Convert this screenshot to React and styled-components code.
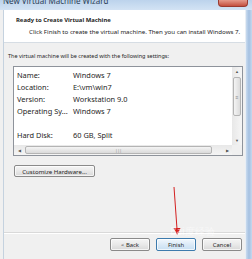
import React from "react";
import styled, { createGlobalStyle } from "styled-components";

const GlobalStyle = createGlobalStyle`
  html, body { margin: 0; padding: 0; background: #f0f0f0; }
  body { font-family: "Noto Sans", "Liberation Sans", sans-serif; color: #1e1e1e; }
`;

const Frame = styled.div`
  position: relative;
  width: 252px;
  height: 259px;
  overflow: hidden;
  display: flex;
  flex-direction: column;
  background: #f0f0f0;
`;

const TitleBar = styled.div`
  height: 10px;
  flex: none;
  display: flex;
  align-items: flex-start;
  justify-content: space-between;
  background: linear-gradient(#bcd3ec, #d3e3f4);
  overflow: hidden;
`;

const TitleText = styled.span`
  font-size: 8px;
  line-height: 8px;
  color: #2b3f57;
  margin: -3px 0 0 3px;
  white-space: nowrap;
`;

const CloseBtn = styled.div`
  width: 28px;
  height: 6px;
  margin-right: 4px;
  border-radius: 0 0 4px 4px;
  background: linear-gradient(#e59a8c, #c4503f);
  border: 1px solid #9a3a30;
  border-top: none;
`;

const Row = styled.div`
  flex: 1;
  display: flex;
  min-height: 0;
`;

const Dialog = styled.div`
  flex: 1;
  display: flex;
  flex-direction: column;
  margin-left: 3px;
  border-left: 1px solid #c5d2df;
  border-right: 1px solid #e8eef5;
`;

const RightEdge = styled.div`
  width: 6px;
  flex: none;
  background: linear-gradient(90deg, #c9dbef, #a4c0e1 50%, #c6d8ee);
`;

const Header = styled.div`
  height: 33px;
  flex: none;
  background: #fff;
  border-bottom: 1px solid #d6dde4;
  padding: 4px 0 0 12px;
  box-sizing: border-box;
`;

const HeadTitle = styled.div`
  font-size: 5.9px;
  font-weight: bold;
  line-height: 12px;
  white-space: nowrap;
`;

const HeadSub = styled.div`
  font-size: 6.15px;
  line-height: 12px;
  padding-left: 13px;
  white-space: nowrap;
`;

const Body = styled.div`
  flex: 1;
  display: flex;
  flex-direction: column;
  padding: 8px 0 0 4px;
`;

const Intro = styled.div`
  font-size: 5.5px;
  line-height: 10px;
  white-space: nowrap;
`;

const ListBox = styled.div`
  margin: 5px 0 0 5px;
  width: 230px;
  height: 90px;
  box-sizing: border-box;
  border: 1px solid #8e939b;
  background: #fff;
  display: grid;
  grid-template-columns: 1fr 10px;
  grid-template-rows: 1fr 10px;
`;

const List = styled.div`
  overflow: hidden;
  padding: 2px 0 0 3px;
`;

const Item = styled.div`
  display: flex;
  height: 12px;
  line-height: 12px;
  font-size: 7.4px;
  white-space: nowrap;
`;

const Label = styled.span`
  width: 56px;
  flex: none;
`;

const VScroll = styled.div`
  display: flex;
  flex-direction: column;
  align-items: center;
  background: linear-gradient(90deg, #e8e8e8, #f5f5f5);
`;

const ArrowBox = styled.div`
  width: ${p => p.w || 10}px;
  height: ${p => p.h || 9}px;
  display: flex;
  align-items: center;
  justify-content: center;
  font-size: 4px;
  color: #555;
  flex: none;
`;

const VThumb = styled.div`
  width: 8px;
  height: 39px;
  margin-top: 1px;
  box-sizing: border-box;
  border: 1px solid #b4b4b4;
  border-radius: 2px;
  background: linear-gradient(90deg, #f4f4f4, #dcdcdc);
  display: flex;
  align-items: center;
  justify-content: center;
  font-size: 5px;
  color: #888;
`;

const Spacer = styled.div`
  flex: 1;
`;

const HScroll = styled.div`
  display: flex;
  align-items: center;
  background: linear-gradient(#e8e8e8, #f5f5f5);
`;

const HThumb = styled.div`
  width: 187px;
  height: 8px;
  margin-left: 1px;
  box-sizing: border-box;
  border: 1px solid #b4b4b4;
  border-radius: 2px;
  background: linear-gradient(#f4f4f4, #dadada);
  display: flex;
  align-items: center;
  justify-content: center;
  font-size: 4px;
  color: #888;
`;

const Corner = styled.div`
  background: #f0f0f0;
`;

const Button = styled.button`
  font-family: inherit;
  font-size: 5.9px;
  color: #1e1e1e;
  height: 13px;
  width: ${p => p.w || 40}px;
  padding: 0;
  box-sizing: border-box;
  border: 1px solid ${p => (p.primary ? "#3d7bad" : "#8a8a8a")};
  border-radius: 2px;
  background: ${p =>
    p.primary
      ? "linear-gradient(#f2f8fd, #dbeaf7 50%, #c7dff2)"
      : "linear-gradient(#f5f5f5, #e9e9e9 50%, #d8d8d8)"};
  box-shadow: inset 0 0 0 1px rgba(255, 255, 255, 0.7);
`;

const CustomizeBtn = styled(Button)`
  margin: 9px 0 0 6px;
  height: 12px;
  font-size: 6.1px;
`;

const Footer = styled.div`
  height: 27px;
  flex: none;
  box-sizing: border-box;
  border-top: 1px solid #d9d9d9;
  box-shadow: inset 0 1px 0 #fff;
  display: flex;
  justify-content: flex-end;
  align-items: flex-start;
  gap: 6px;
  padding: 5px 3px 0 0;
`;

const Overlay = styled.svg`
  position: absolute;
  left: 0;
  top: 0;
  pointer-events: none;
`;

const Watermark = styled.div`
  position: absolute;
  left: 170px;
  top: 224px;
  font-size: 10px;
  color: #fff;
  opacity: 0.55;
  white-space: nowrap;
  pointer-events: none;
`;

const settings = [
  ["Name:", "Windows 7"],
  ["Location:", "E:\\vm\\win7"],
  ["Version:", "Workstation 9.0"],
  ["Operating Sy...", "Windows 7"],
  ["", ""],
  ["Hard Disk:", "60 GB, Split"],
  ["Memory:", "1024 MB"],
];

export default function App() {
  return (
    <Frame>
      <GlobalStyle />
      <TitleBar>
        <TitleText>New Virtual Machine Wizard</TitleText>
        <CloseBtn />
      </TitleBar>
      <Row>
        <Dialog>
          <Header>
            <HeadTitle>Ready to Create Virtual Machine</HeadTitle>
            <HeadSub>Click Finish to create the virtual machine. Then you can install Windows 7.</HeadSub>
          </Header>
          <Body>
            <Intro>The virtual machine will be created with the following settings:</Intro>
            <ListBox>
              <List>
                {settings.map(([k, v], i) => (
                  <Item key={i}>
                    <Label>{k}</Label>
                    <span>{v}</span>
                  </Item>
                ))}
              </List>
              <VScroll>
                <ArrowBox>▲</ArrowBox>
                <VThumb>≡</VThumb>
                <Spacer />
                <ArrowBox>▼</ArrowBox>
              </VScroll>
              <HScroll>
                <ArrowBox h={10}>◀</ArrowBox>
                <HThumb>|||</HThumb>
                <Spacer />
                <ArrowBox h={10}>▶</ArrowBox>
              </HScroll>
              <Corner />
            </ListBox>
            <CustomizeBtn w={81}>Customize Hardware...</CustomizeBtn>
          </Body>
          <Footer>
            <Button>&lt; Back</Button>
            <Button primary>Finish</Button>
            <Button>Cancel</Button>
          </Footer>
        </Dialog>
        <RightEdge />
      </Row>
      <Overlay width="252" height="259" viewBox="0 0 252 259">
        <line x1="174" y1="187" x2="177" y2="229" stroke="#d42020" strokeWidth="1" />
        <polygon points="173.5,228 180.5,228 177.3,235" fill="#d42020" />
      </Overlay>
      <Watermark>Bai度经验</Watermark>
    </Frame>
  );
}
